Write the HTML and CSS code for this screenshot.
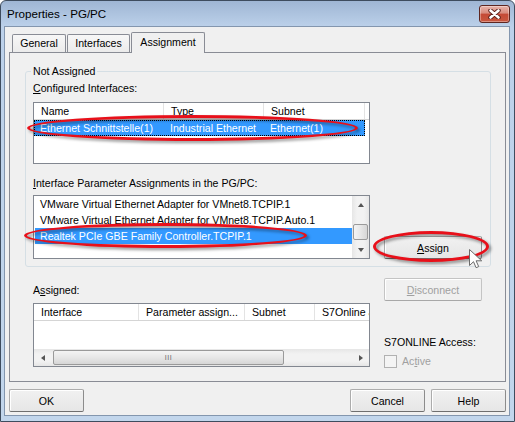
FILE: index.html
```html
<!DOCTYPE html>
<html lang="en">
<head>
  <meta charset="UTF-8" />
  <title>Properties - PG/PC</title>
  <link rel="stylesheet" href="styles.css">
</head>
<body>

  <div class="window">
    <!-- Title bar -->
    <div class="titlebar">
      <span class="title">Properties - PG/PC</span>
      <button class="close-btn">
        <svg width="13" height="10" viewBox="0 0 13 10">
          <path d="M2.5 1.5l8 7M10.5 1.5l-8 7" stroke="#5a1f1a" stroke-width="4.4" stroke-linecap="round"/>
          <path d="M2.5 1.5l8 7M10.5 1.5l-8 7" stroke="#fff" stroke-width="2.6" stroke-linecap="round"/>
        </svg>
      </button>
    </div>

    <div class="client">
      <!-- Tabs -->
      <div class="tabs">
        <div class="tab tab-general">General</div>
        <div class="tab tab-interfaces">Interfaces</div>
        <div class="tab tab-assignment active">Assignment</div>
      </div>

      <div class="tab-panel">
        <fieldset class="group">
          <legend>Not Assigned</legend>
          <div class="row">
            <div class="col-lists">
              <div class="label"><u>C</u>onfigured Interfaces:</div>
              <div class="listview list-configured">
                <div class="lv-header">
                  <div class="cell c-name">Name</div>
                  <div class="cell c-type">Type</div>
                  <div class="cell c-subnet">Subnet</div>
                </div>
                <div class="lv-row selected focused">
                  <div class="cell c-name">Ethernet Schnittstelle(1)</div>
                  <div class="cell c-type">Industrial Ethernet</div>
                  <div class="cell c-subnet">Ethernet(1)</div>
                </div>
              </div>

              <div class="label label-params"><u>I</u>nterface Parameter Assignments in the PG/PC:</div>
              <div class="listview list-params">
                <div class="lv-body">
                  <div class="lv-item">VMware Virtual Ethernet Adapter for VMnet8.TCPIP.1</div>
                  <div class="lv-item">VMware Virtual Ethernet Adapter for VMnet8.TCPIP.Auto.1</div>
                  <div class="lv-item selected">Realtek PCIe GBE Family Controller.TCPIP.1</div>
                </div>
                <div class="vscroll">
                  <div class="sb-btn"><span class="arrow arrow-up"></span></div>
                  <div class="sb-track">
                    <div class="sb-thumb"></div>
                  </div>
                  <div class="sb-btn"><span class="arrow arrow-down"></span></div>
                </div>
              </div>
            </div>
            <div class="col-side side-assign">
              <button class="btn btn-wide"><u>A</u>ssign</button>
            </div>
          </div>
        </fieldset>

        <div class="row assigned">
          <div class="col-lists">
            <div class="label label-assigned">A<u>s</u>signed:</div>
            <div class="listview list-assigned">
              <div class="lv-header">
                <div class="cell c-iface">Interface</div>
                <div class="cell c-param">Parameter assign...</div>
                <div class="cell c-sub2">Subnet</div>
                <div class="cell c-s7">S7Online access</div>
              </div>
              <div class="lv-fill"></div>
              <div class="hscroll">
                <div class="sb-btn"><span class="arrow arrow-left"></span></div>
                <div class="sb-track">
                  <div class="sb-thumb"><span class="grip">III</span></div>
                </div>
                <div class="sb-btn"><span class="arrow arrow-right"></span></div>
              </div>
            </div>
          </div>
          <div class="col-side side-access">
            <button class="btn btn-wide" disabled><u>D</u>isconnect</button>
            <div class="label label-access">S7ONLINE Access:</div>
            <label class="check disabled"><span class="box"></span>Ac<u>t</u>ive</label>
          </div>
        </div>
      </div>

      <!-- Dialog buttons -->
      <div class="footer">
        <button class="btn">OK</button>
        <span class="spacer"></span>
        <button class="btn">Cancel</button>
        <button class="btn">Help</button>
      </div>
    </div>

    <!-- Red highlight rings and pointer -->
    <div class="ring ring-configured"></div>
    <div class="ring ring-params"></div>
    <div class="ring ring-assign"></div>
    <svg class="pointer" width="13" height="20" viewBox="0 0 13 20">
      <path d="M0.5 0.5v16l4-3.8 2.6 6 2.6-1.1-2.6-5.8h5.6z" fill="#fff" stroke="#6a6a6a" stroke-width="1"/>
    </svg>
  </div>

</body>
</html>
```

FILE: styles.css
```css
/* Global */
body {
  margin: 0;
  background: #fff;
  font-family: "Liberation Sans", Arial, sans-serif;
  font-size: 10.6px;
  color: #000;
}
button {
  font-family: inherit;
  font-size: inherit;
  padding: 0;
  margin: 0;
}
u {
  text-decoration-thickness: 1px;
  text-underline-offset: 1px;
}

/* Window frame */
.window {
  position: relative;
  width: 515px;
  height: 422px;
  box-sizing: border-box;
  border: 1px solid #3e4c5e;
  border-radius: 6px 6px 0 0;
  background: linear-gradient(#9fb6d4, #bcd1ea 26px, #c2d6ec);
  overflow: hidden;
}
.titlebar {
  display: flex;
  justify-content: space-between;
  align-items: flex-start;
  height: 25px;
  padding: 0 4px 0 6px;
}
.title {
  font-size: 11.6px;
  line-height: 25px;
}
.close-btn {
  margin-top: 4px;
  width: 31px;
  height: 18px;
  box-sizing: border-box;
  border: 1px solid #5e2620;
  border-radius: 3px;
  background: linear-gradient(#e9b4aa, #d88a7c 45%, #c44a36 50%, #c9573f);
  box-shadow: inset 0 0 0 1px rgba(255, 255, 255, 0.35);
  display: flex;
  align-items: center;
  justify-content: center;
}
.client {
  margin: 0 4px 0 3px;
  height: 390px;
  box-sizing: border-box;
  border: 1px solid #8396ae;
  background: #f0f0f0;
}

/* Tabs */
.tabs {
  display: flex;
  align-items: flex-end;
  padding: 5px 0 0 7px;
  position: relative;
  z-index: 1;
}
.tab {
  height: 18px;
  box-sizing: border-box;
  border: 1px solid #898c95;
  border-bottom: none;
  border-radius: 2px 2px 0 0;
  background: linear-gradient(#f7f7f7, #ebebeb);
  text-align: center;
  line-height: 17px;
  margin-right: 1px;
}
.tab-general { width: 54px; }
.tab-interfaces { width: 63px; }
.tab-assignment { width: 74px; }
.tab.active {
  height: 21px;
  margin-bottom: -1px;
  background: #f0f0f0;
  line-height: 19px;
}
.tab-panel {
  height: 330px;
  box-sizing: border-box;
  margin: 0 3px 0 4px;
  border: 1px solid #898c95;
  padding: 12px 14px 0 15px;
}

/* Group box */
.group {
  margin: 0;
  padding: 4px 7px 7px;
  border: 1px solid #d5dfe5;
  border-radius: 3px;
}
.group legend {
  padding: 0 2px;
  margin-left: -2px;
  line-height: 13px;
}
.row {
  display: flex;
  gap: 14px;
}
.col-lists {
  width: 337px;
}
.col-side {
  width: 98px;
  display: flex;
  flex-direction: column;
}
.side-assign {
  justify-content: flex-end;
}
.label {
  line-height: 13px;
  white-space: nowrap;
}
.label-params { margin-top: 13px; }

/* List views */
.listview {
  box-sizing: border-box;
  width: 337px;
  border: 1px solid #828790;
  background: #fff;
  overflow: hidden;
}
.list-configured {
  margin-top: 7px;
  height: 62px;
}
.list-params {
  margin-top: 5px;
  height: 64px;
  display: flex;
}
.lv-header {
  display: flex;
  height: 16px;
  border-bottom: 1px solid #d5d5d5;
  white-space: nowrap;
  overflow: hidden;
}
.lv-header .cell {
  flex-shrink: 0;
  box-sizing: border-box;
  border-right: 1px solid #e3e3e3;
  padding-left: 7px;
  line-height: 16px;
  overflow: hidden;
}
.lv-row {
  display: flex;
  width: 331px;
  height: 16px;
  white-space: nowrap;
}
.lv-row .cell {
  box-sizing: border-box;
  padding-left: 6px;
  line-height: 16px;
}
.c-name { width: 130px; }
.c-type { width: 100px; }
.c-subnet { width: 101px; }
.selected {
  background: #3399ff;
  color: #fff;
}
.focused {
  outline: 1px dotted #000;
  outline-offset: -1px;
}
.lv-body {
  flex: 1;
}
.lv-item {
  height: 16px;
  line-height: 16px;
  padding-left: 5px;
  white-space: nowrap;
  margin-left: 1px;
}

/* Scroll bars */
.vscroll {
  width: 17px;
  display: flex;
  flex-direction: column;
  background: linear-gradient(90deg, #e6e6e6, #f2f2f2 30%, #f2f2f2 70%, #e6e6e6);
}
.vscroll .sb-btn {
  height: 17px;
}
.vscroll .sb-track {
  flex: 1;
  display: flex;
  flex-direction: column;
}
.vscroll .sb-thumb {
  height: 16px;
  margin: 11px 1px 0;
  box-sizing: border-box;
  border: 1px solid #9a9a9a;
  border-radius: 2px;
  background: linear-gradient(90deg, #f4f4f4, #e7e7e7 50%, #d6d6d6);
}
.sb-btn {
  display: flex;
  align-items: center;
  justify-content: center;
}
.arrow {
  width: 0;
  height: 0;
  border: 3px solid transparent;
}
.arrow-up { border-bottom: 4px solid #555; border-top: none; }
.arrow-down { border-top: 4px solid #555; border-bottom: none; }
.arrow-left { border-right: 4px solid #555; border-left: none; }
.arrow-right { border-left: 4px solid #555; border-right: none; }

.assigned {
  margin-left: 8px;
}
.label-assigned {
  margin-top: 17px;
}
.list-assigned {
  margin-top: 6px;
  height: 64px;
  display: flex;
  flex-direction: column;
}
.c-iface { width: 105px; }
.c-param { width: 106px; }
.c-sub2 { width: 70px; }
.c-s7 { width: 80px; }
.lv-fill {
  flex: 1;
}
.hscroll {
  height: 17px;
  display: flex;
  background: linear-gradient(#e6e6e6, #f2f2f2 30%, #f2f2f2 70%, #e6e6e6);
}
.hscroll .sb-btn {
  width: 17px;
}
.hscroll .sb-track {
  flex: 1;
  display: flex;
  align-items: center;
  padding-left: 2px;
}
.hscroll .sb-thumb {
  width: 231px;
  height: 15px;
  box-sizing: border-box;
  border: 1px solid #9a9a9a;
  border-radius: 2px;
  background: linear-gradient(#f4f4f4, #e7e7e7 50%, #d6d6d6);
  display: flex;
  align-items: center;
  justify-content: center;
}
.grip {
  font-size: 7px;
  letter-spacing: 0.5px;
  color: #6a6a6a;
  line-height: 7px;
}

/* Access column */
.side-access .btn {
  margin-top: 11px;
}
.label-access {
  margin-top: 35px;
}
.check {
  display: flex;
  align-items: center;
  margin-top: 6px;
  height: 13px;
  line-height: 13px;
}
.check .box {
  width: 13px;
  height: 13px;
  box-sizing: border-box;
  border: 1px solid #b1b1b1;
  background: #f4f4f4;
  margin-right: 5px;
}
.check.disabled {
  color: #a0a0a0;
}

/* Buttons */
.btn {
  width: 75px;
  height: 23px;
  box-sizing: border-box;
  border: 1px solid #acacac;
  border-bottom-color: #6f6f6f;
  border-right-color: #8c8c8c;
  border-radius: 2px;
  background: linear-gradient(#f1f1f1, #e6e6e6);
  box-shadow: inset 1px 1px 0 #fff;
  color: #000;
}
.btn-wide {
  width: 98px;
}
.btn:disabled {
  color: #a0a0a0;
  border-color: #c4c4c4;
  border-bottom-color: #a8a8a8;
  background: #f0f0f0;
}
.footer {
  display: flex;
  gap: 6px;
  margin-top: 7px;
  padding: 0 3px 0 4px;
}
.spacer {
  flex: 1;
}

/* Red highlight rings */
.ring {
  position: absolute;
  box-sizing: border-box;
  border: 3px solid #e8101a;
  border-radius: 50%;
  filter: drop-shadow(2px 2px 1.5px rgba(0, 0, 0, 0.45));
}
.ring-configured {
  left: 26px;
  top: 114px;
  width: 331px;
  height: 26px;
}
.ring-params {
  left: 23px;
  top: 222px;
  width: 283px;
  height: 25px;
}
.ring-assign {
  left: 372px;
  top: 230px;
  width: 116px;
  height: 31px;
}
.pointer {
  position: absolute;
  left: 468px;
  top: 248px;
}
```
